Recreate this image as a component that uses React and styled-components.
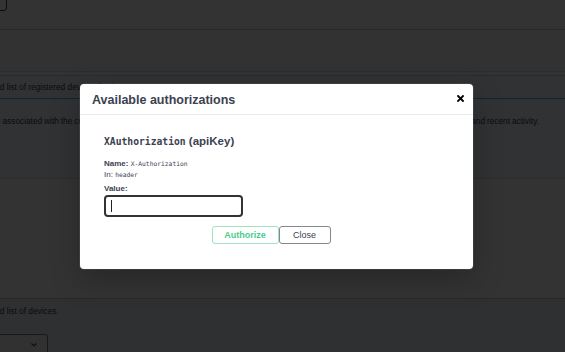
import React from 'react';
import styled, { createGlobalStyle } from 'styled-components';

const GlobalStyle = createGlobalStyle`
  html, body {
    margin: 0;
    padding: 0;
    width: 565px;
    height: 352px;
    overflow: hidden;
    background: #fff;
  }
  body {
    font-family: "Liberation Sans", Arial, sans-serif;
    color: #3b4151;
  }
`;

const Page = styled.div`
  position: relative;
  width: 565px;
  height: 352px;
  overflow: hidden;
  background: #fff;
`;

/* page is scrolled a little to the right, so the content starts off-screen */
const Content = styled.div`
  margin-left: -33px;
  width: 760px;
  font-size: 8.3px;
  color: #3b4151;
`;

const SchemeBar = styled.div`
  display: flex;
  align-items: flex-start;
  height: 29px;
  border-bottom: 1px solid #c4c6cb;
`;

const SchemeSelect = styled.div`
  width: 38px;
  height: 18px;
  margin-top: -9px;
  border: 1.5px solid #41444e;
  border-radius: 3px;
`;

const Section = styled.div`
  height: 41px;
  background: #f7f7f7;
  border-bottom: 1px solid #d8dade;
  margin-bottom: 3px;
`;

const OpBlock = styled.div`
  background: #eff7ff;
  border-top: 1px solid #c9def3;
`;

const Summary = styled.div`
  display: flex;
  align-items: center;
  height: 22px;
  border-bottom: 1px solid #61afe1;
`;

const Description = styled.div`
  height: 79px;
  padding: 16px 0 0 4px;
  box-sizing: border-box;
  line-height: 12px;
  white-space: nowrap;
  word-spacing: ${({ spacing }) => spacing};
`;

const Plain = styled.div`
  height: 119px;
  background: #fff;
  border-top: 1px solid #d8dade;
  border-bottom: 1px solid #c4c6cb;
`;

const Responses = styled.div`
  background: #ebf0f7;
  padding-top: 6px;
  height: 60px;
`;

const ResponseText = styled.div`
  line-height: 12px;
`;

const MediaSelect = styled.div`
  display: flex;
  align-items: center;
  justify-content: flex-end;
  width: 81px;
  height: 22px;
  margin-top: 17px;
  padding-right: 10px;
  box-sizing: border-box;
  border: 1.5px solid #5a8a6a;
  border-radius: 3px;
  background: #f2f6f4;
`;

const Overlay = styled.div`
  position: absolute;
  inset: 0;
  background: rgba(0, 0, 0, 0.8);
  display: flex;
  align-items: flex-start;
  padding: 84px 0 0 80px;
  box-sizing: border-box;
`;

const Modal = styled.div`
  width: 393px;
  background: #fff;
  border-radius: 4px;
  box-shadow: 0 0 0 1px rgba(255, 255, 255, 0.08), 0 10px 30px rgba(0, 0, 0, 0.25);
`;

const ModalHeader = styled.div`
  display: flex;
  align-items: center;
  justify-content: space-between;
  height: 30px;
  padding: 0 9px 0 12px;
  border-bottom: 1px solid #ebebeb;
`;

const ModalTitle = styled.h3`
  margin: 1px 0 0;
  font-size: 12.5px;
  font-weight: 700;
  color: #3b4151;
`;

const CloseButton = styled.button`
  display: flex;
  align-items: center;
  justify-content: center;
  width: 8px;
  height: 8px;
  padding: 0;
  border: none;
  background: transparent;
  margin-top: -2px;
`;

const ModalBody = styled.div`
  padding: 19px 24px 25px;
`;

const AuthTitle = styled.h4`
  margin: 0 0 9px;
  font-size: 11.5px;
  line-height: 14px;
  font-weight: 700;
  color: #3b4151;
`;

const Code = styled.code`
  font-family: "DejaVu Sans Mono", "Liberation Mono", monospace;
  font-size: ${({ size }) => size || '6.3px'};
  font-weight: ${({ bold }) => (bold ? 700 : 400)};
`;

const InfoLine = styled.p`
  margin: 0;
  font-size: 8px;
  line-height: 11px;
  color: #3b4151;
`;

const Strong = styled.span`
  font-weight: 700;
`;

const ValueLabel = styled.label`
  display: block;
  margin-top: 3px;
  font-size: 8px;
  line-height: 11px;
  font-weight: 700;
  color: #3b4151;
`;

const InputWrap = styled.div`
  position: relative;
  width: 139px;
  margin-top: 1px;

  &::after {
    content: '';
    position: absolute;
    left: 7px;
    top: 5px;
    width: 1px;
    height: 12px;
    background: #222;
  }
`;

const ValueInput = styled.input`
  display: block;
  width: 139px;
  height: 22px;
  box-sizing: border-box;
  border: 2px solid #333;
  border-radius: 4px;
  outline: none;
  padding: 0 6px;
  background: #fff;
`;

const ButtonRow = styled.div`
  display: flex;
  justify-content: center;
  margin-top: 9px;
  padding-right: 11px;
`;

const Btn = styled.button`
  height: 18px;
  padding: 0;
  box-sizing: border-box;
  font-family: "Liberation Sans", Arial, sans-serif;
  font-size: 9px;
  font-weight: ${({ primary }) => (primary ? 700 : 400)};
  color: ${({ primary }) => (primary ? '#49cc90' : '#3b4151')};
  background: #fff;
  border: 1.5px solid ${({ primary }) => (primary ? '#9fe3c2' : '#888')};
  border-radius: 3px;
  width: ${({ w }) => w};
`;

const Chevron = () => (
  <svg width="6" height="4" viewBox="0 0 6 4">
    <path d="M0.5 0.5 L3 3 L5.5 0.5" fill="none" stroke="#3b4151" strokeWidth="1.2" />
  </svg>
);

const CloseIcon = () => (
  <svg width="7" height="7" viewBox="0 0 7 7">
    <path d="M1 1 L6 6 M6 1 L1 6" stroke="#000" strokeWidth="1.8" strokeLinecap="square" />
  </svg>
);

const App = () => {
  return (
    <Page>
      <GlobalStyle />
      <Content>
        <SchemeBar>
          <SchemeSelect />
        </SchemeBar>
        <Section />
        <OpBlock>
          <Summary>Paginated list of registered devices for the user</Summary>
          <Description spacing="-0.35px">
            Devices associated with the current user account, including their registration status,
            platform, hardware details, OS version, last sync time and recent activity.
          </Description>
        </OpBlock>
        <Plain />
        <Responses>
          <ResponseText>Paginated list of devices.</ResponseText>
          <MediaSelect>
            <Chevron />
          </MediaSelect>
        </Responses>
      </Content>

      <Overlay>
        <Modal>
          <ModalHeader>
            <ModalTitle>Available authorizations</ModalTitle>
            <CloseButton aria-label="Close">
              <CloseIcon />
            </CloseButton>
          </ModalHeader>
          <ModalBody>
            <AuthTitle>
              <Code bold size="9.7px">XAuthorization</Code> (apiKey)
            </AuthTitle>
            <InfoLine>
              <Strong>Name:</Strong> <Code>X-Authorization</Code>
            </InfoLine>
            <InfoLine>
              In: <Code>header</Code>
            </InfoLine>
            <ValueLabel>Value:</ValueLabel>
            <InputWrap>
              <ValueInput type="text" />
            </InputWrap>
            <ButtonRow>
              <Btn primary w="67px">Authorize</Btn>
              <Btn w="52px">Close</Btn>
            </ButtonRow>
          </ModalBody>
        </Modal>
      </Overlay>
    </Page>
  );
};

export default App;
